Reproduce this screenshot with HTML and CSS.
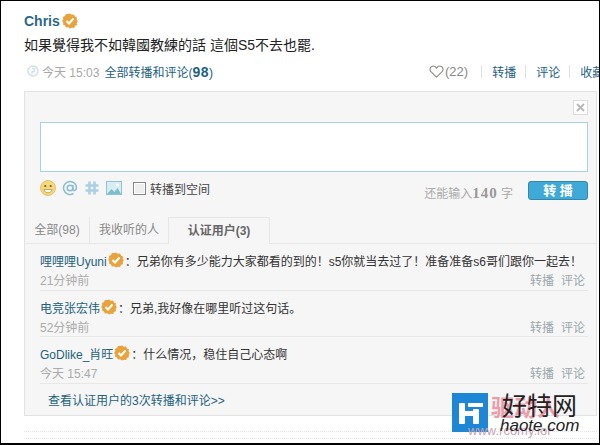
FILE: index.html
```html
<!DOCTYPE html>
<html lang="zh">
<head>
<meta charset="utf-8">
<title>Chris</title>
<link rel="stylesheet" href="styles.css">
</head>
<body>
<svg class="defs" width="0" height="0" aria-hidden="true">
  <symbol id="vbadge" viewBox="0 0 16 16">
    <path fill="#e8a33d" d="M8 .5l1.900 1.200 2.200-.2.900 2 2 1-.3 2.200L15.900 8l-1.200 1.900.3 2.200-2 .9-.9 2-2.200-.2L8 15.500l-1.900-1.200-2.200.2-.9-2-2-.9.3-2.200L.1 8l1.200-1.900-.3-2.200 2-1 .9-2 2.200.2z"/>
    <path fill="none" stroke="#fff" stroke-width="2" d="M4.500 8l2.500 2.500 4.500-5"/>
  </symbol>
</svg>
<div class="frame">
  <div class="head"><span class="author">Chris</span><svg class="badge"><use href="#vbadge"/></svg></div>
  <p class="message">如果覺得我不如韓國教練的話 這個S5不去也罷.</p>
  <div class="meta">
    <div class="meta-left">
      <svg class="source" viewBox="0 0 12 12"><circle cx="6" cy="6" r="5" fill="none" stroke="#cfe0e6" stroke-width="1.500"/><path d="M5 3.500h2.500v3H5v3" fill="none" stroke="#cfe0e6" stroke-width="1.300"/></svg>
      <span class="time">今天 15:03</span>
      <a class="link">全部转播和评论(<b>98</b>)</a>
    </div>
    <div class="actions">
      <svg class="heart" viewBox="0 0 16 14"><path d="M8 13L2 7.200C.3 5.400.8 2.600 2.800 1.600 4.800.7 6.900 1.500 8 3.500 9.100 1.500 11.200.7 13.200 1.600c2 1 2.500 3.800.8 5.600z" fill="none" stroke="#8a8a8a" stroke-width="1.100"/></svg>
      <span class="count">(22)</span>
      <i class="sep"></i><a class="link">转播</a>
      <i class="sep"></i><a class="link">评论</a>
      <i class="sep"></i><a class="link clip">收藏</a>
    </div>
  </div>
  <div class="panel">
    <div class="close-row"><span class="close"><svg viewBox="0 0 9 9"><path d="M1 1l7 7M8 1L1 8" stroke="#b8b8b8" stroke-width="2"/></svg></span></div>
    <div class="input"></div>
    <div class="tools">
      <div class="tools-left">
        <svg class="tool" viewBox="0 0 16 16"><circle cx="8" cy="8" r="7.500" fill="#f3d97c" stroke="#e2b956" stroke-width=".8"/><circle cx="5.300" cy="6" r="1.100" fill="#7a5f20"/><circle cx="10.700" cy="6" r="1.100" fill="#7a5f20"/><path d="M4 9.500h8c-.4 2.200-2 3.300-4 3.300S4.400 11.700 4 9.500z" fill="#fff" stroke="#b08a33" stroke-width=".7"/></svg>
        <svg class="tool" viewBox="0 0 16 16"><circle cx="8" cy="8" r="2.800" fill="none" stroke="#86bcd6" stroke-width="1.500"/><path d="M10.800 5v4c0 2.500 3.700 2 3.700-1.200C14.500 4 11.500 1.500 8 1.500a6.500 6.500 0 1 0 3.500 12" fill="none" stroke="#86bcd6" stroke-width="1.500"/></svg>
        <svg class="tool" viewBox="0 0 16 16"><path d="M5.500 1.500v13M10.500 1.500v13M1.500 5.500h13M1.500 10.500h13" stroke="#a9d0e4" stroke-width="2.600"/></svg>
        <svg class="tool" viewBox="0 0 16 16"><rect x=".5" y="1.500" width="15" height="13" fill="#d8edf2" stroke="#8fc4d3"/><path d="M1 14l4.500-5 3 3 3-4 3.500 6z" fill="#7dbccd"/><circle cx="11.500" cy="5" r="1.500" fill="#fff"/></svg>
        <label class="share"><span class="check"></span>转播到空间</label>
      </div>
      <div class="tools-right">
        <span class="remain">还能输入<b>140</b> 字</span>
        <span class="submit">转 播</span>
      </div>
    </div>
    <div class="tabs">
      <span class="tab first">全部(98)</span><span class="tab second">我收听的人</span><span class="tab active">认证用户(3)</span>
    </div>
    <ul class="comments">
      <li class="comment">
        <div class="line"><a class="link">哩哩哩Uyuni</a><svg class="badge"><use href="#vbadge"/></svg><span class="text">：兄弟你有多少能力大家都看的到的！s5你就当去过了！准备准备s6哥们跟你一起去！</span></div>
        <div class="sub"><span>21分钟前</span><span class="ops"><a>转播</a><a>评论</a></span></div>
      </li>
      <li class="comment">
        <div class="line"><a class="link">电竞张宏伟</a><svg class="badge"><use href="#vbadge"/></svg><span class="text">：兄弟,我好像在哪里听过这句话。</span></div>
        <div class="sub"><span>52分钟前</span><span class="ops"><a>转播</a><a>评论</a></span></div>
      </li>
      <li class="comment">
        <div class="line"><a class="link">GoDlike_肖旺</a><svg class="badge"><use href="#vbadge"/></svg><span class="text">：什么情况，稳住自己心态啊</span></div>
        <div class="sub"><span>今天 15:47</span><span class="ops"><a>转播</a><a>评论</a></span></div>
      </li>
    </ul>
    <a class="link more">查看认证用户的3次转播和评论&gt;&gt;</a>
  </div>
  <div class="dots"></div>
  <div class="dots near"></div>
</div>
<div class="watermark">
  <svg class="wm-logo" viewBox="0 0 36 39" aria-hidden="true">
    <rect width="36" height="39" fill="#1d87d6"/>
    <rect x="7" y="10" width="6" height="21" rx="1" fill="#fff"/>
    <rect x="7" y="18" width="20" height="5" fill="#fff"/>
    <rect x="21" y="16" width="6" height="15" rx="1" fill="#fff"/>
    <rect x="16" y="10" width="15" height="4" fill="#fff"/>
  </svg>
  <span class="wm-pink">驱动人</span>
  <span class="wm-url">www.rcomy.ior</span>
  <span class="wm-cn">好特网</span>
  <span class="wm-en">haote.com</span>
</div>
</body>
</html>
```
FILE: styles.css
```css
* { box-sizing: border-box; }
html, body { margin: 0; padding: 0; }
body {
  width: 600px;
  height: 445px;
  overflow: hidden;
  position: relative;
  background: #fff;
  font-family: "Liberation Sans", "Noto Sans CJK SC", sans-serif;
  font-size: 12px;
  color: #333;
}
.defs { position: absolute; }
.frame {
  height: 445px;
  border-top: 1px solid #000;
  border-left: 1px solid #000;
  border-right: 1px solid #000;
  border-bottom: 2px solid #000;
  padding: 11px 0 0 23px;
  overflow: hidden;
}
.head { display: flex; align-items: center; height: 17px; gap: 2px; }
.author { font-size: 14px; font-weight: bold; color: #2a6a86; }
.badge { width: 16px; height: 16px; flex: none; }
.message { margin: 6px 0 0; font-size: 14px; line-height: 20px; color: #222; white-space: nowrap; }
.meta {
  display: flex;
  justify-content: space-between;
  align-items: center;
  height: 18px;
  margin-top: 7px;
  padding-left: 3px;
  width: 575px;
}
.meta-left { display: flex; align-items: center; gap: 3px; color: #aaa; }
.source { width: 12px; height: 12px; }
.link { color: #1d6280; }
.link b { font-weight: bold; font-size: 14px; letter-spacing: .5px; }
.time { color: #a8a8a8; margin-right: 2px; }
.actions { display: flex; align-items: center; width: 170px; flex: none; overflow: hidden; white-space: nowrap; }
.heart { width: 15px; height: 13px; flex: none; }
.count { color: #888; font-size: 13px; margin-left: 1px; margin-right: 13px; }
.sep { width: 1px; height: 13px; background: #e0e0e0; margin-right: 10px; flex: none; }
.actions .link { margin-right: 9px; }
.actions .clip { margin-right: 0; }
.panel {
  width: 573px;
  height: 325px;
  margin-top: 11px;
  background: #f6f6f6;
  border: 1px solid #e2e2e2;
  padding: 0 8px 0 15px;
  display: flex;
  flex-direction: column;
}
.close-row { display: flex; justify-content: flex-end; height: 30px; padding-top: 8px; flex: none; }
.close {
  width: 15px; height: 15px;
  border: 1px solid #ddd;
  background: #fff;
  padding: 2px;
  display: block;
}
.close svg { display: block; width: 9px; height: 9px; }
.input { height: 50px; background: #fff; border: 1px solid #a5d4dd; flex: none; }
.tools { display: flex; justify-content: space-between; height: 45px; padding-top: 8px; flex: none; }
.tools-left { display: flex; align-items: flex-start; gap: 6px; height: 16px; }
.tool { width: 16px; height: 16px; flex: none; }
.share { display: flex; align-items: center; margin-left: 5px; gap: 4px; color: #444; height: 16px; }
.check { width: 13px; height: 13px; border: 1px solid #888; background: #eee; box-shadow: inset 0 0 0 1px #fff; }
.tools-right { display: flex; align-items: flex-start; }
.remain { color: #aaa; margin-top: 4px; }
.remain b { font-family: "Liberation Serif", serif; font-size: 15px; letter-spacing: 1px; color: #999; }
.submit {
  width: 60px;
  height: 19px;
  margin-left: 15px;
  margin-top: 1px;
  background: #3fa9d8;
  border: 1px solid #2f88ae;
  border-radius: 3px;
  color: #fff;
  font-size: 13px;
  line-height: 17px;
  text-align: center;
  font-weight: bold;
}
.tabs { display: flex; height: 27px; margin-left: -15px; margin-right: -8px; border-bottom: 1px solid #e6e6e6; flex: none; }
.tab { line-height: 26px; color: #888; border-right: 1px solid #e6e6e6; height: 26px; text-align: center; }
.tab.first { width: 65px; }
.tab.second { width: 79px; }
.tab.active {
  width: 101px;
  font-weight: bold;
  color: #666;
  background: #f6f6f6;
  border-top: 1px solid #e6e6e6;
  height: 27px;
}
.comments { list-style: none; margin: 0; padding: 0; }
.comment { border-bottom: 1px solid #e8e8e8; height: 46px; padding-top: 7px; width: 548px; }
.comment:first-child, .comment:last-child { height: 47px; }
.line { display: flex; align-items: center; height: 18px; white-space: nowrap; gap: 1px; color: #333; }
.sub { display: flex; justify-content: space-between; height: 20px; color: #aaa; align-items: center; padding-right: 3px; }
.ops { display: flex; gap: 7px; color: #9aa7ad; }
.more { display: block; margin: 9px 0 0 8px; line-height: 16px; }
.dots { width: 573px; margin-top: 15px; border-top: 1px dotted #e4e4e4; }
.dots.near { margin-top: 6px; }
.watermark {
  position: absolute;
  left: 452px;
  top: 393px;
  width: 130px;
  height: 48px;
}
.wm-logo { position: absolute; left: 0; top: 0; width: 36px; height: 39px; }
.wm-pink { position: absolute; left: 39px; top: 1px; font-size: 23px; line-height: 28px; font-weight: bold; color: #eb9cab; white-space: nowrap; }
.wm-url { position: absolute; left: 16px; top: 31px; font-size: 13px; line-height: 14px; color: #c9a3b3; white-space: nowrap; }
.wm-cn { position: absolute; left: 50px; top: -4px; font-size: 25px; line-height: 30px; color: #222; font-family: "Noto Sans CJK SC", sans-serif; white-space: nowrap; }
.wm-en { position: absolute; left: 48px; top: 24px; font-size: 17px; line-height: 17px; font-style: italic; color: #222; white-space: nowrap; }
```
